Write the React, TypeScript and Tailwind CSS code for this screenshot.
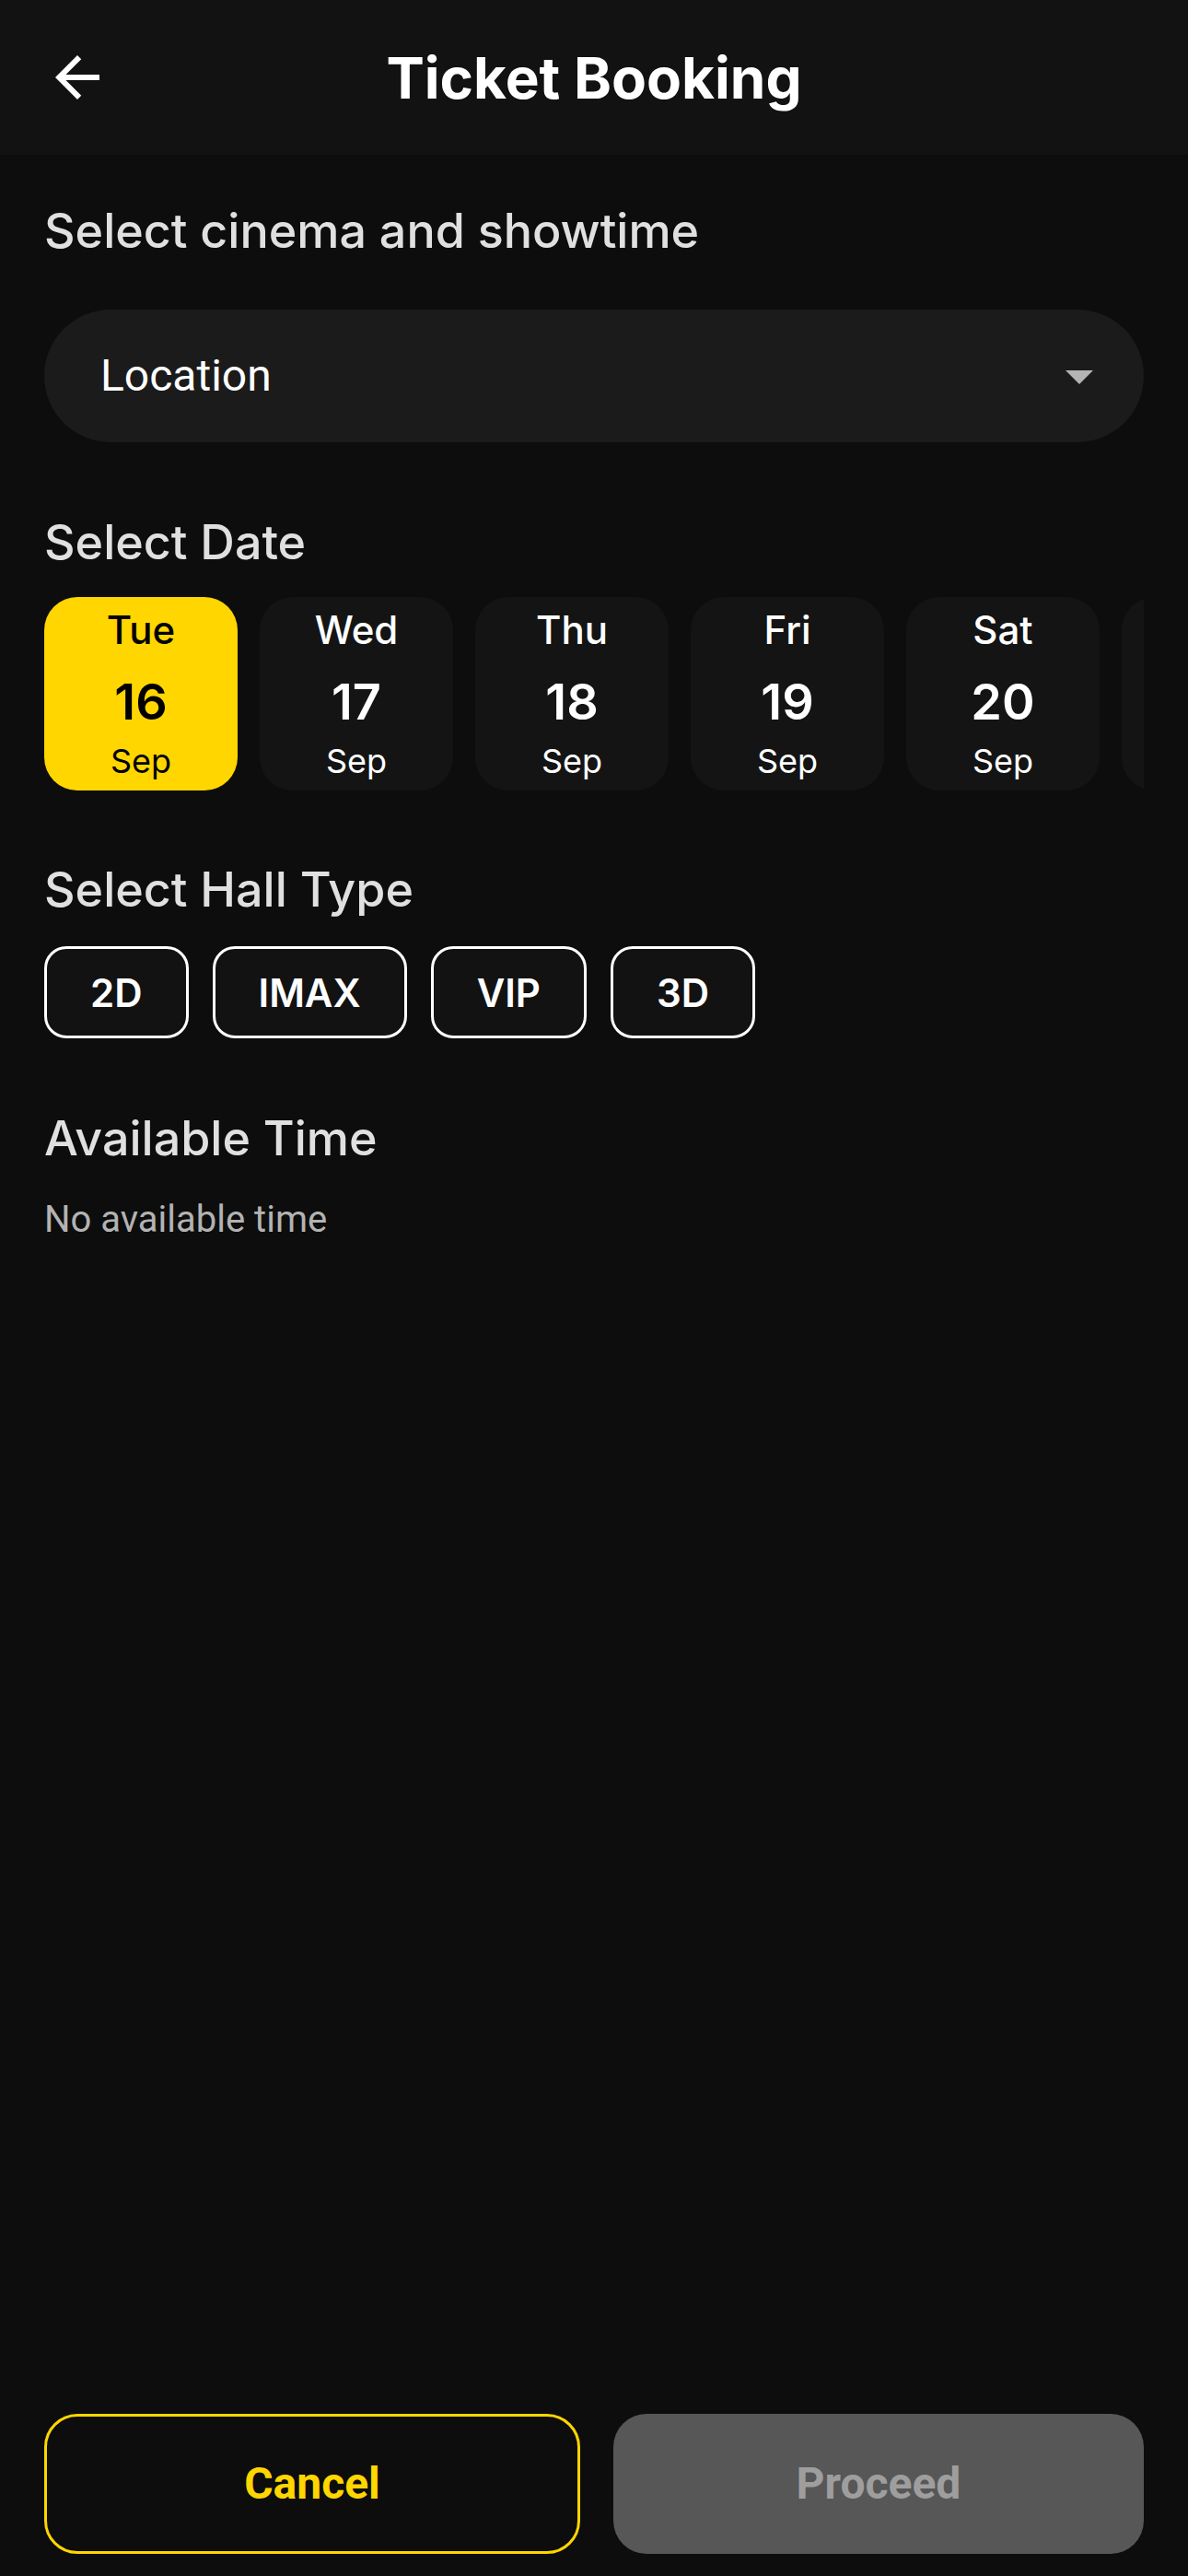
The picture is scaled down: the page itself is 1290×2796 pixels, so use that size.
import React, { useState } from 'react';

const heading = "font-['Inter',sans-serif]";
const body = "font-['Roboto',sans-serif]";

const dates = [
  { day: 'Tue', num: '16', month: 'Sep' },
  { day: 'Wed', num: '17', month: 'Sep' },
  { day: 'Thu', num: '18', month: 'Sep' },
  { day: 'Fri', num: '19', month: 'Sep' },
  { day: 'Sat', num: '20', month: 'Sep' },
  { day: 'Sun', num: '21', month: 'Sep' },
];

const halls = ['2D', 'IMAX', 'VIP', '3D'];

const SectionTitle = ({ children, className = '' }: { children: React.ReactNode; className?: string }) => (
  <h2 className={`${heading} text-[52px] leading-[72px] font-medium text-[#e0e0e0] ${className}`}>{children}</h2>
);

export default function App() {
  const [selected, setSelected] = useState(0);

  return (
    <div className="min-h-screen bg-[#0d0d0d] flex flex-col">
      {/* app bar */}
      <header className="h-[168px] bg-[#121212] flex items-center relative">
        <button className="w-[72px] h-[72px] ml-[48px] flex items-center justify-center">
          <svg viewBox="0 0 24 24" className="w-[72px] h-[72px]" fill="#ffffff">
            <path d="M20 11H7.83l5.59-5.59L12 4l-8 8 8 8 1.41-1.41L7.83 13H20v-2z" />
          </svg>
        </button>
        <h1 className={`${heading} absolute left-0 right-0 text-center text-[62px] font-bold text-white pointer-events-none`}>
          Ticket Booking
        </h1>
      </header>

      <main className="px-[48px] flex flex-col">
        <SectionTitle className="mt-[47px]">Select cinema and showtime</SectionTitle>

        <div className="mt-[49px] h-[144px] rounded-full bg-[#1b1b1b] flex items-center justify-between pl-[61px] pr-[34px]">
          <span className={`${body} text-[48px] text-white`}>Location</span>
          <svg viewBox="0 0 24 24" className="w-[72px] h-[72px]" fill="#b4b4b4">
            <path d="M7 10l5 5 5-5z" />
          </svg>
        </div>

        <SectionTitle className="mt-[73px]">Select Date</SectionTitle>

        <div className="mt-[23px] flex gap-[24px] overflow-hidden">
          {dates.map((d, i) => {
            const active = i === selected;
            return (
              <button
                key={d.num}
                onClick={() => setSelected(i)}
                className={`shrink-0 w-[210px] h-[210px] rounded-[36px] flex flex-col items-center pt-[15px] ${
                  active ? 'bg-[#ffd600] text-black' : 'bg-[#141414] text-white'
                }`}
              >
                <span className={`${heading} text-[42px] leading-[42px] font-medium`}>{d.day}</span>
                <span className={`${heading} mt-[30px] text-[54px] leading-[54px] font-semibold`}>{d.num}</span>
                <span className={`${heading} mt-[19px] text-[36px] leading-[36px]`}>{d.month}</span>
              </button>
            );
          })}
        </div>

        <SectionTitle className="mt-[72px]">Select Hall Type</SectionTitle>

        <div className="mt-[25px] flex gap-[26px]">
          {halls.map((h) => (
            <button
              key={h}
              className={`${heading} h-[100px] px-[47px] rounded-[24px] border-[3px] border-white bg-[#121212] text-white text-[42px] font-semibold`}
            >
              {h}
            </button>
          ))}
        </div>

        <SectionTitle className="mt-[73px]">Available Time</SectionTitle>
        <p className={`${body} mt-[28px] text-[40px] leading-[48px] text-[#b3b3b3]`}>No available time</p>
      </main>

      <footer className="mt-auto px-[48px] pb-[24px] flex gap-[36px]">
        <button className={`${body} flex-1 h-[152px] rounded-[36px] border-[3px] border-[#ffd600] text-[#ffd600] text-[48px] font-bold`}>
          Cancel
        </button>
        <button className={`${body} flex-1 h-[152px] rounded-[36px] bg-[#575757] text-[#9e9e9e] text-[48px] font-bold`}>
          Proceed
        </button>
      </footer>
    </div>
  );
}
